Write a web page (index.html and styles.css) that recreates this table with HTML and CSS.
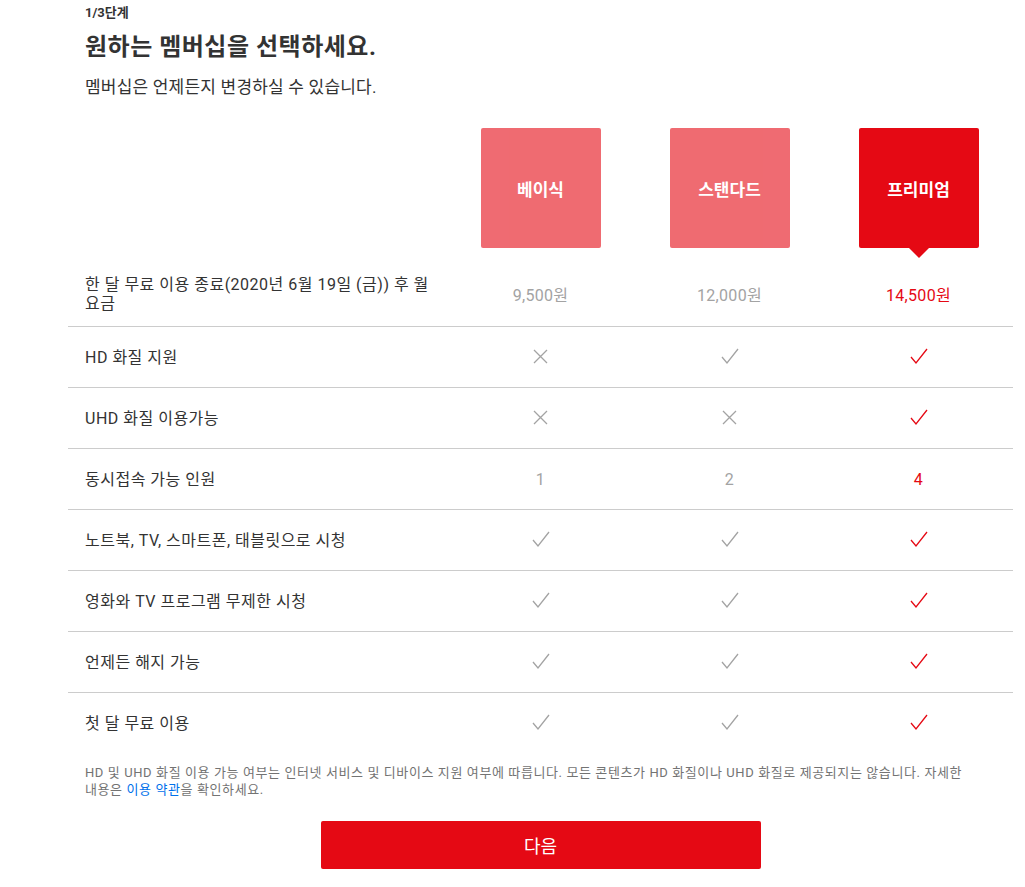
FILE: index.html
```html
<!DOCTYPE html>
<html lang="ko">
<head>
<meta charset="utf-8">
<title>멤버십 선택</title>
<link rel="stylesheet" href="styles.css">
</head>
<body>
<div class="page">
  <div class="intro">
    <div class="step">1/3단계</div>
    <h1 class="title">원하는 멤버십을 선택하세요.</h1>
    <p class="subtitle">멤버십은 언제든지 변경하실 수 있습니다.</p>
  </div>

  <div class="plans">
    <div class="plan-head"></div>
    <div class="plan-cell"><div class="plan-box">베이식</div></div>
    <div class="plan-cell"><div class="plan-box">스탠다드</div></div>
    <div class="plan-cell"><div class="plan-box selected">프리미엄</div></div>
  </div>

  <div class="row price-row">
    <div class="label">한 달 무료 이용 종료(2020년 6월 19일 (금)) 후 월 요금</div>
    <div class="val">9,500원</div>
    <div class="val">12,000원</div>
    <div class="val sel">14,500원</div>
  </div>

  <div class="row">
    <div class="label">HD 화질 지원</div>
    <div class="val"><svg class="ico" viewBox="0 0 20 20"><path d="M3 3 L16 16 M16 3 L3 16"/></svg></div>
    <div class="val"><svg class="ico" viewBox="0 0 20 20"><path d="M2 10 L7 16 L18 2"/></svg></div>
    <div class="val sel"><svg class="ico" viewBox="0 0 20 20"><path d="M2 10 L7 16 L18 2"/></svg></div>
  </div>

  <div class="row">
    <div class="label">UHD 화질 이용가능</div>
    <div class="val"><svg class="ico" viewBox="0 0 20 20"><path d="M3 3 L16 16 M16 3 L3 16"/></svg></div>
    <div class="val"><svg class="ico" viewBox="0 0 20 20"><path d="M3 3 L16 16 M16 3 L3 16"/></svg></div>
    <div class="val sel"><svg class="ico" viewBox="0 0 20 20"><path d="M2 10 L7 16 L18 2"/></svg></div>
  </div>

  <div class="row">
    <div class="label">동시접속 가능 인원</div>
    <div class="val">1</div>
    <div class="val">2</div>
    <div class="val sel">4</div>
  </div>

  <div class="row">
    <div class="label">노트북, TV, 스마트폰, 태블릿으로 시청</div>
    <div class="val"><svg class="ico" viewBox="0 0 20 20"><path d="M2 10 L7 16 L18 2"/></svg></div>
    <div class="val"><svg class="ico" viewBox="0 0 20 20"><path d="M2 10 L7 16 L18 2"/></svg></div>
    <div class="val sel"><svg class="ico" viewBox="0 0 20 20"><path d="M2 10 L7 16 L18 2"/></svg></div>
  </div>

  <div class="row">
    <div class="label">영화와 TV 프로그램 무제한 시청</div>
    <div class="val"><svg class="ico" viewBox="0 0 20 20"><path d="M2 10 L7 16 L18 2"/></svg></div>
    <div class="val"><svg class="ico" viewBox="0 0 20 20"><path d="M2 10 L7 16 L18 2"/></svg></div>
    <div class="val sel"><svg class="ico" viewBox="0 0 20 20"><path d="M2 10 L7 16 L18 2"/></svg></div>
  </div>

  <div class="row">
    <div class="label">언제든 해지 가능</div>
    <div class="val"><svg class="ico" viewBox="0 0 20 20"><path d="M2 10 L7 16 L18 2"/></svg></div>
    <div class="val"><svg class="ico" viewBox="0 0 20 20"><path d="M2 10 L7 16 L18 2"/></svg></div>
    <div class="val sel"><svg class="ico" viewBox="0 0 20 20"><path d="M2 10 L7 16 L18 2"/></svg></div>
  </div>

  <div class="row last">
    <div class="label">첫 달 무료 이용</div>
    <div class="val"><svg class="ico" viewBox="0 0 20 20"><path d="M2 10 L7 16 L18 2"/></svg></div>
    <div class="val"><svg class="ico" viewBox="0 0 20 20"><path d="M2 10 L7 16 L18 2"/></svg></div>
    <div class="val sel"><svg class="ico" viewBox="0 0 20 20"><path d="M2 10 L7 16 L18 2"/></svg></div>
  </div>

  <p class="disclaimer">HD 및 UHD 화질 이용 가능 여부는 인터넷 서비스 및 디바이스 지원 여부에 따릅니다. 모든 콘텐츠가 HD 화질이나 UHD 화질로 제공되지는 않습니다. 자세한 내용은 <a href="#" class="link">이용 약관</a>을 확인하세요.</p>

  <div class="actions">
    <button class="next">다음</button>
  </div>
</div>
</body>
</html>
```

FILE: styles.css
```css
html, body {
  margin: 0;
  padding: 0;
  background: #fff;
}

body {
  font-family: Roboto, "Noto Sans CJK KR", sans-serif;
  color: #333;
}

.page {
  width: 945px;
  margin-left: 68px;
}

.intro {
  padding: 5px 17px 0;
}

.step {
  font-size: 13px;
  font-weight: 700;
  line-height: 16px;
  color: #333;
}

.title {
  margin: 10px 0 0;
  font-size: 24px;
  font-weight: 700;
  line-height: 32px;
  letter-spacing: 0.5px;
  color: #333;
}

.subtitle {
  margin: 12px 0 0;
  font-size: 17px;
  line-height: 24px;
  letter-spacing: 0.2px;
  color: #333;
}

.plans {
  display: grid;
  grid-template-columns: 378px repeat(3, 1fr);
  margin-top: 29px;
}

.plan-cell {
  display: flex;
  justify-content: center;
}

.plan-box {
  position: relative;
  width: 120px;
  height: 120px;
  border-radius: 2px;
  background: #e50914;
  opacity: 0.6;
  color: #fff;
  font-size: 17px;
  font-weight: 700;
  display: flex;
  align-items: center;
  justify-content: center;
}

.plan-box.selected {
  opacity: 1;
}

.plan-box.selected::after {
  content: "";
  position: absolute;
  left: 50%;
  top: 100%;
  margin-left: -10px;
  border-left: 10px solid transparent;
  border-right: 10px solid transparent;
  border-top: 10px solid #e50914;
}

.row {
  display: grid;
  grid-template-columns: 378px repeat(3, 1fr);
  align-items: center;
  min-height: 60px;
  border-bottom: 1px solid #ccc;
}

.row.last {
  border-bottom: none;
}

.price-row {
  padding: 13px 0;
  min-height: 0;
  margin-top: 14px;
}

.label {
  padding: 0 12px 0 17px;
  font-size: 16px;
  line-height: 19px;
  letter-spacing: 0.5px;
  word-break: keep-all;
  color: #333;
}

.val {
  display: flex;
  justify-content: center;
  align-items: center;
  font-size: 16px;
  letter-spacing: 0.3px;
  color: #a3a3a3;
}

.val.sel {
  color: #e50914;
}

.ico {
  width: 20px;
  height: 20px;
  fill: none;
  stroke: currentColor;
  stroke-width: 1.3;
}

.disclaimer {
  margin: 11px 0 0;
  padding: 0 30px 0 17px;
  font-size: 13px;
  line-height: 17px;
  letter-spacing: 0.6px;
  word-break: keep-all;
  color: #737373;
}

.link {
  color: #0071eb;
  text-decoration: none;
}

.actions {
  display: flex;
  justify-content: center;
  margin-top: 23px;
}

.next {
  width: 440px;
  height: 48px;
  border: none;
  border-radius: 2px;
  background: #e50914;
  color: #fff;
  font-family: Roboto, "Noto Sans CJK KR", sans-serif;
  font-size: 18px;
}
```
